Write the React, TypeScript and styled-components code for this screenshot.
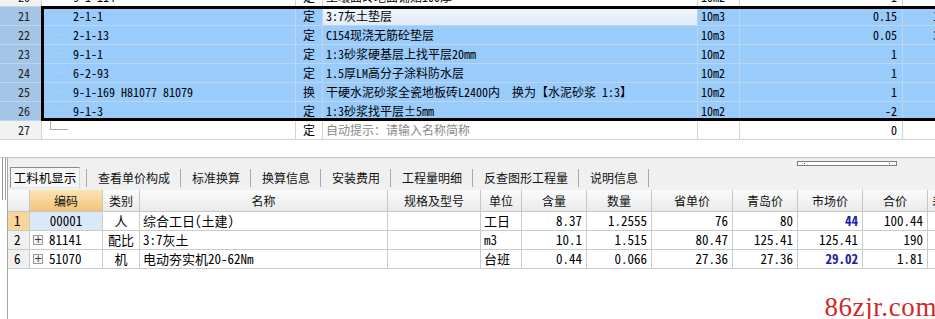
import { Fragment } from 'react';
import styled, { createGlobalStyle } from 'styled-components';

const GlobalStyle = createGlobalStyle`
  *, *::before, *::after { box-sizing: border-box; }
  html, body { margin: 0; padding: 0; background: #fff; }
  body {
    width: 935px;
    height: 319px;
    overflow: hidden;
    font-family: 'Noto Sans Mono CJK SC', 'Noto Sans CJK SC', 'DejaVu Sans', sans-serif;
    font-size: 12px;
    color: #000;
  }
`;

type TopItem = {
  no: number;
  code: string;
  type: string;
  name: string;
  unit: string;
  qty: string;
  extra?: string;
  focus?: boolean;
  hint?: boolean;
};

const before: TopItem = { no: 20, code: '9-1-114', type: '定', name: '土壤面砖地面铺贴100厚', unit: '10m2', qty: '1' };

const selected: TopItem[] = [
  { no: 21, code: '2-1-1', type: '定', name: '3:7灰土垫层', unit: '10m3', qty: '0.15', extra: '13.16', focus: true },
  { no: 22, code: '2-1-13', type: '定', name: 'C154现浇无筋砼垫层', unit: '10m3', qty: '0.05', extra: '3.69' },
  { no: 23, code: '9-1-1', type: '定', name: '1:3砂浆硬基层上找平层20mm', unit: '10m2', qty: '1' },
  { no: 24, code: '6-2-93', type: '定', name: '1.5厚LM高分子涂料防水层', unit: '10m2', qty: '1' },
  { no: 25, code: '9-1-169 H81077 81079', type: '换', name: '干硬水泥砂浆全瓷地板砖L2400内　换为【水泥砂浆 1:3】', unit: '10m2', qty: '1' },
  { no: 26, code: '9-1-3', type: '定', name: '1:3砂浆找平层±5mm', unit: '10m2', qty: '-2' },
];

const after: TopItem = { no: 27, code: '', type: '定', name: '自动提示：请输入名称简称', unit: '', qty: '0', hint: true };

const tabs = ['查看单价构成', '标准换算', '换算信息', '安装费用', '工程量明细', '反查图形工程量', '说明信息'];

type Res = {
  no: number;
  code: string;
  kind: string;
  name: string;
  unit: string;
  amount: string;
  count: string;
  prov: string;
  qd: string;
  market: string;
  total: string;
  expand?: boolean;
  current?: boolean;
  changed?: boolean;
};

const resources: Res[] = [
  { no: 1, code: '00001', kind: '人', name: '综合工日(土建)', unit: '工日', amount: '8.37', count: '1.2555', prov: '76', qd: '80', market: '44', total: '100.44', current: true, changed: true },
  { no: 2, code: '81141', kind: '配比', name: '3:7灰土', unit: 'm3', amount: '10.1', count: '1.515', prov: '80.47', qd: '125.41', market: '125.41', total: '190', expand: true },
  { no: 6, code: '51070', kind: '机', name: '电动夯实机20-62Nm', unit: '台班', amount: '0.44', count: '0.066', prov: '27.36', qd: '27.36', market: '29.02', total: '1.81', expand: true, changed: true },
];

const Page = styled.div`
  display: flex;
  flex-direction: column;
  width: 935px;
  height: 319px;
`;

const TopPane = styled.div`
  height: 158px;
  flex: none;
  overflow: hidden;
  border-bottom: 1px solid #c4c4c4;
`;

const TopBody = styled.div`
  margin-top: -12px;
`;

const SelGroup = styled.div`
  position: relative;

  &::after {
    content: '';
    position: absolute;
    top: -1px;
    bottom: 0;
    left: 41px;
    right: -10px;
    border: 3px solid #000;
    pointer-events: none;
  }
`;

const TopRow = styled.div<{ $sel?: boolean }>`
  display: grid;
  grid-template-columns: 42px 254px 27px 375px 42px 163px 1fr;
  height: 19px;
  background: ${({ $sel }) => ($sel ? '#99cbfb' : '#fff')};

  & > div {
    border-right: 1px solid ${({ $sel }) => ($sel ? '#bdd6ef' : '#d4d4d4')};
    border-bottom: 1px solid ${({ $sel }) => ($sel ? '#bdd6ef' : '#d4d4d4')};
  }
`;

const RowNum = styled.div<{ $sel?: boolean }>`
  background: ${({ $sel }) => ($sel ? '#a5c5e6' : '#f2f2f2')};
  color: #222;
  text-align: center;
  padding-left: 7px;
  line-height: 18px;
`;

const TopCell = styled.div<{ $align?: 'left' | 'center' | 'right'; $focus?: boolean; $muted?: boolean }>`
  padding: 0 ${({ $align }) => ($align === 'right' ? '5px' : '3px')};
  text-align: ${({ $align }) => $align ?? 'left'};
  white-space: nowrap;
  overflow: hidden;
  line-height: 18px;
  color: ${({ $muted }) => ($muted ? '#8a8a8a' : '#000')};
  background: ${({ $focus }) => ($focus ? 'linear-gradient(#f0f6fd, #e0ecf9)' : 'transparent')};
`;

const ExtraCell = styled(TopCell)`
  padding-left: 30px;
`;

const CodeCell = styled.div`
  display: flex;
  white-space: nowrap;
  overflow: hidden;
  line-height: 18px;
`;

const Tree = styled.span<{ $last?: boolean; $sel?: boolean }>`
  flex: none;
  width: 18px;
  height: 9px;
  margin: 0 5px 0 8px;
  border-bottom: 1px solid ${({ $sel }) => ($sel ? '#b2cce6' : '#a9a9a9')};
  border-left: ${({ $last }) => ($last ? '1px solid #a9a9a9' : 'none')};
`;

const Bottom = styled.div`
  flex: 1;
  display: flex;
  min-height: 0;
`;

const Gutter = styled.div`
  width: 7px;
  flex: none;
  padding: 0 0 0 2px;
`;

const Grip = styled.div`
  width: 4px;
  height: 42px;
  border-left: 1px solid #9a9a9a;
  border-right: 1px solid #9a9a9a;
`;

const Pane = styled.div`
  flex: 1;
  display: flex;
  flex-direction: column;
  border-left: 1px solid #a5a5a5;
  min-width: 0;
`;

const TabBar = styled.div`
  height: 32px;
  flex: none;
  background: #f0f0f0;
  display: flex;
  flex-direction: column;
`;

const ThumbStrip = styled.div`
  height: 8px;
  padding-top: 3px;
  display: flex;
  justify-content: flex-end;
  padding-right: 38px;
`;

const Thumb = styled.div`
  width: 100px;
  height: 5px;
  border: 1px solid #7d7d7d;
  background: #fff;
  display: flex;
  justify-content: space-between;
  padding: 1px 6px 0;
`;

const Dot = styled.span`
  width: 1px;
  height: 1px;
  background: #444;
`;

const TabRow = styled.div`
  height: 23px;
  display: flex;
  align-items: center;
  padding-left: 2px;
  font-family: 'Noto Sans CJK SC', sans-serif;
`;

const ActiveTab = styled.div`
  width: 70px;
  height: 21px;
  margin-right: 6px;
  border: 1px solid #8c8c8c;
  border-right-color: #d8d8d8;
  border-bottom-color: #e8e8e8;
  background: #f6f6f6;
  text-align: center;
  line-height: 19px;
  font-size: 12.5px;
`;

const Tab = styled.div`
  padding: 0 10px 0 11px;
  line-height: 21px;
  color: #111;
`;

const TabSep = styled.span`
  width: 1px;
  height: 18px;
  background: #a8a8a8;
`;

const resCols = '22px 73px 37px 248px 93px 41px 65px 65px 81px 65px 65px 65px 72px';

const ResHead = styled.div`
  display: grid;
  grid-template-columns: ${resCols};
  height: 22px;
  flex: none;
  font-family: 'Noto Sans CJK SC', sans-serif;
`;

const HeadCell = styled.div<{ $hot?: boolean; $left?: boolean }>`
  background: ${({ $hot }) => ($hot ? 'linear-gradient(#fbe4b4, #f2c579)' : 'linear-gradient(#fbfbfb, #eaeaea)')};
  border-right: 1px solid #c6c6c6;
  border-bottom: 1px solid #c6c6c6;
  text-align: ${({ $left }) => ($left ? 'left' : 'center')};
  padding-left: ${({ $left }) => ($left ? '4px' : '0')};
  line-height: 21px;
  white-space: nowrap;
  overflow: hidden;
  color: #111;
`;

const ResRow = styled.div`
  display: grid;
  grid-template-columns: ${resCols};
  height: 19px;
  flex: none;
  font-size: 13px;
`;

const ResCell = styled.div<{ $align?: 'left' | 'center' | 'right'; $bg?: string; $strong?: boolean }>`
  border-right: 1px solid #cbcbcb;
  border-bottom: 1px solid #cbcbcb;
  background: ${({ $bg }) => $bg ?? '#fff'};
  text-align: ${({ $align }) => $align ?? 'left'};
  padding: 0 ${({ $align }) => ($align === 'right' ? '4px' : '3px')};
  line-height: 18px;
  white-space: nowrap;
  overflow: hidden;
  color: ${({ $strong }) => ($strong ? '#1b1ba8' : '#000')};
  font-weight: ${({ $strong }) => ($strong ? 700 : 400)};
`;

const ResNum = styled(ResCell)`
  background: ${({ $bg }) => $bg ?? '#f0f0f0'};
  padding-left: 6px;
`;

const ResCode = styled(ResCell)`
  display: flex;
  align-items: center;
  gap: 6px;
  padding-left: 3px;
`;

const PlusBox = styled.span`
  width: 10px;
  height: 10px;
  flex: none;
  border: 1px solid #9a9a9a;
  background: #f4f4f4;
  font-size: 10px;
  line-height: 8px;
  text-align: center;
  color: #333;
  font-family: 'DejaVu Sans', sans-serif;
`;

const Blank = styled.div`
  flex: 1;
  display: flex;
  justify-content: flex-end;
  align-items: flex-end;
`;

const Watermark = styled.div`
  font-family: 'Liberation Serif', 'DejaVu Serif', serif;
  font-size: 27px;
  line-height: 24px;
  color: #d02828;
  letter-spacing: 0.6px;
  margin-right: -2px;
`;

function TopLine({ item, sel }: { item: TopItem; sel?: boolean }) {
  return (
    <TopRow $sel={sel}>
      <RowNum $sel={sel}>{item.no}</RowNum>
      <CodeCell>
        <Tree $sel={sel} $last={item.hint} />
        {item.code}
      </CodeCell>
      <TopCell $align="center">{item.type}</TopCell>
      <TopCell $focus={item.focus} $muted={item.hint}>{item.name}</TopCell>
      <TopCell>{item.unit}</TopCell>
      <TopCell $align="right">{item.qty}</TopCell>
      <ExtraCell>{item.extra}</ExtraCell>
    </TopRow>
  );
}

export default function App() {
  return (
    <Page>
      <GlobalStyle />
      <TopPane>
        <TopBody>
          <TopLine item={before} />
          <SelGroup>
            {selected.map((item) => (
              <TopLine key={item.no} item={item} sel />
            ))}
          </SelGroup>
          <TopLine item={after} />
        </TopBody>
      </TopPane>
      <Bottom>
        <Gutter>
          <Grip />
        </Gutter>
        <Pane>
          <TabBar>
            <ThumbStrip>
              <Thumb>
                <Dot />
                <Dot />
              </Thumb>
            </ThumbStrip>
            <TabRow>
              <ActiveTab>工料机显示</ActiveTab>
              {tabs.map((t) => (
                <Fragment key={t}>
                  <TabSep />
                  <Tab>{t}</Tab>
                </Fragment>
              ))}
              <TabSep />
            </TabRow>
          </TabBar>
          <ResHead>
            <HeadCell />
            <HeadCell $hot>编码</HeadCell>
            <HeadCell>类别</HeadCell>
            <HeadCell>名称</HeadCell>
            <HeadCell>规格及型号</HeadCell>
            <HeadCell>单位</HeadCell>
            <HeadCell>含量</HeadCell>
            <HeadCell>数量</HeadCell>
            <HeadCell>省单价</HeadCell>
            <HeadCell>青岛价</HeadCell>
            <HeadCell>市场价</HeadCell>
            <HeadCell>合价</HeadCell>
            <HeadCell $left>差价</HeadCell>
          </ResHead>
          {resources.map((r) => (
            <ResRow key={r.no}>
              <ResNum $bg={r.current ? '#f8d69b' : undefined}>{r.no}</ResNum>
              {r.expand ? (
                <ResCode>
                  <PlusBox>+</PlusBox>
                  {r.code}
                </ResCode>
              ) : (
                <ResCell $align="center" $bg={r.current ? '#dbe8f7' : undefined}>
                  {r.code}
                </ResCell>
              )}
              <ResCell $align="center">{r.kind}</ResCell>
              <ResCell>{r.name}</ResCell>
              <ResCell />
              <ResCell>{r.unit}</ResCell>
              <ResCell $align="right">{r.amount}</ResCell>
              <ResCell $align="right">{r.count}</ResCell>
              <ResCell $align="right">{r.prov}</ResCell>
              <ResCell $align="right">{r.qd}</ResCell>
              <ResCell $align="right" $strong={r.changed}>{r.market}</ResCell>
              <ResCell $align="right">{r.total}</ResCell>
              <ResCell />
            </ResRow>
          ))}
          <Blank>
            <Watermark>86zjr.com</Watermark>
          </Blank>
        </Pane>
      </Bottom>
    </Page>
  );
}
